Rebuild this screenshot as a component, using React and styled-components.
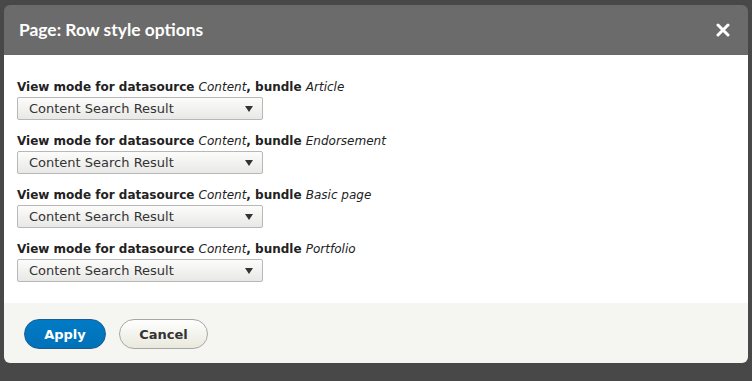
import styled, { createGlobalStyle } from "styled-components";

const GlobalStyle = createGlobalStyle`
  html, body {
    margin: 0;
    padding: 0;
    background: #484848;
    font-family: "DejaVu Sans", Verdana, sans-serif;
  }
`

const Screen = styled.div`
  width: 752px;
  height: 381px;
  overflow: hidden;
  padding: 5px 4px 0 4px;
  box-sizing: border-box;
`

const Dialog = styled.div`
  width: 744px;
  border-radius: 6px;
  overflow: hidden;
  display: flex;
  flex-direction: column;
`

const TitleBar = styled.div`
  height: 50px;
  background: #6b6b6b;
  display: flex;
  align-items: center;
  justify-content: space-between;
  padding: 0 16px 1px 15px;
  box-sizing: border-box;
`

const Title = styled.h1`
  margin: 0;
  color: #fff;
  font-family: Lato, "Open Sans", sans-serif;
  font-size: 17.4px;
  font-weight: bold;
`

const Close = styled.button`
  border: 0;
  background: none;
  padding: 0;
  width: 18px;
  height: 18px;
  display: flex;
  align-items: center;
  justify-content: center;
  cursor: pointer;
`

const Body = styled.div`
  background: #fff;
  height: 248px;
  padding: 23px 13px 0 13px;
  box-sizing: border-box;
`

const Field = styled.div`
  margin-bottom: 12px;
`

const Label = styled.label`
  display: block;
  height: 18px;
  line-height: 18px;
  font-size: 12px;
  font-weight: bold;
  color: #222;
  em {
    font-style: italic;
    font-weight: normal;
  }
`

const Select = styled.div`
  margin-top: 1px;
  width: 246px;
  height: 23px;
  box-sizing: border-box;
  border: 1px solid #b8b8b8;
  border-radius: 2px;
  background: linear-gradient(#fcfcfb, #e8e8e6);
  display: flex;
  align-items: center;
  justify-content: space-between;
  padding: 0 9px 0 11px;
  font-size: 13px;
  color: #333;
`

const Arrow = styled.span`
  width: 0;
  height: 0;
  border-left: 4.5px solid transparent;
  border-right: 4.5px solid transparent;
  border-top: 6px solid #333;
  margin-top: 1px;
`

const Footer = styled.div`
  background: #f5f5f2;
  height: 60px;
  padding: 16px 20px 0 20px;
  box-sizing: border-box;
  display: flex;
  align-items: flex-start;
  gap: 13px;
`

const Button = styled.button`
  height: 30px;
  padding: 0;
  width: ${p => p.$w}px;
  border-radius: 15px;
  font-family: inherit;
  font-size: 13px;
  font-weight: bold;
  cursor: pointer;
  border: 1px solid ${p => p.$primary ? "#1e5c90" : "#a6a6a6"};
  background: ${p => p.$primary ? "linear-gradient(#007bc6, #0071b8)" : "linear-gradient(#fefefe, #e9e9dd)"};
  color: ${p => p.$primary ? "#fff" : "#333"};
`

const fields = ["Article", "Endorsement", "Basic page", "Portfolio"]

export default function App() {
  return (
    <Screen>
      <GlobalStyle />
      <Dialog>
        <TitleBar>
          <Title>Page: Row style options</Title>
          <Close aria-label="Close">
            <svg width="14" height="14" viewBox="0 0 14 14">
              <path d="M2 2 L12 12 M12 2 L2 12" stroke="#fff" strokeWidth="3" strokeLinecap="round" />
            </svg>
          </Close>
        </TitleBar>
        <Body>
          {fields.map(f => (
            <Field key={f}>
              <Label>View mode for datasource <em>Content</em>, bundle <em>{f}</em></Label>
              <Select>
                Content Search Result
                <Arrow />
              </Select>
            </Field>
          ))}
        </Body>
        <Footer>
          <Button $primary $w={82}>Apply</Button>
          <Button $w={89}>Cancel</Button>
        </Footer>
      </Dialog>
    </Screen>
  )
}
